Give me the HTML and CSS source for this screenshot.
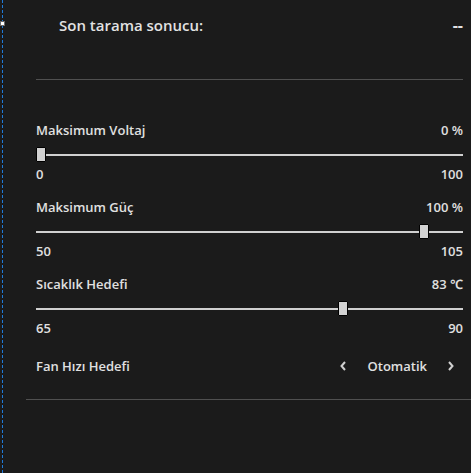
FILE: index.html
```html
<!DOCTYPE html>
<html lang="tr">
<head>
<meta charset="utf-8">
<title>Ayarlar</title>
<link rel="stylesheet" href="styles.css">
</head>
<body>
<div class="frame-edge"></div>
<div class="frame-handle"></div>
<main class="panel">
  <section class="scan">
    <div class="scan-row">
      <span class="scan-label">Son tarama sonucu:</span>
      <span class="scan-value">--</span>
    </div>
  </section>
  <div class="divider divider-top"></div>

  <section class="settings">
    <div class="group">
      <div class="row"><span>Maksimum Voltaj</span><span>0 %</span></div>
      <div class="slider"><div class="track"></div><div class="thumb" style="left: 0%"></div></div>
      <div class="row range"><span>0</span><span>100</span></div>
    </div>
    <div class="group">
      <div class="row"><span>Maksimum Güç</span><span>100 %</span></div>
      <div class="slider"><div class="track"></div><div class="thumb" style="left: 89.7%"></div></div>
      <div class="row range"><span>50</span><span>105</span></div>
    </div>
    <div class="group">
      <div class="row"><span>Sıcaklık Hedefi</span><span>83 ℃</span></div>
      <div class="slider"><div class="track"></div><div class="thumb" style="left: 70.7%"></div></div>
      <div class="row range"><span>65</span><span>90</span></div>
    </div>
    <div class="row fan">
      <span>Fan Hızı Hedefi</span>
      <div class="picker">
        <svg class="chev" width="8" height="12" viewBox="0 0 8 12"><path d="M6 2 L2.5 6 L6 10" fill="none" stroke="#d0d0d0" stroke-width="2"/></svg>
        <span class="picker-value">Otomatik</span>
        <svg class="chev" width="8" height="12" viewBox="0 0 8 12"><path d="M2 2 L5.5 6 L2 10" fill="none" stroke="#d0d0d0" stroke-width="2"/></svg>
      </div>
    </div>
  </section>
  <div class="divider divider-bottom"></div>
</main>
</body>
</html>
```

FILE: styles.css
```css
html, body {
  margin: 0;
  padding: 0;
  background: #1b1b1b;
}
body {
  font-family: "Open Sans", "Noto Sans", "DejaVu Sans", sans-serif;
  color: #e0e0e0;
  height: 473px;
  overflow: hidden;
  position: relative;
}
.frame-edge {
  position: absolute;
  left: 2px;
  top: 0;
  bottom: 0;
  border-left: 1px dashed #1f7ad8;
}
.frame-handle {
  position: absolute;
  left: 0;
  top: 21px;
  width: 3px;
  height: 3px;
  background: #ffffff;
  border: 1px solid #6a6a6a;
}
.panel {
  display: flex;
  flex-direction: column;
}
.scan {
  padding: 14px 8px 0 59px;
}
.scan-row {
  display: flex;
  justify-content: space-between;
  align-items: center;
  height: 22px;
}
.scan-label {
  font-size: 15px;
  font-weight: 600;
  color: #e2e2e2;
}
.scan-value {
  font-size: 16px;
  font-weight: 700;
  color: #e2e2e2;
}
.divider {
  height: 1px;
  background: #505050;
}
.divider-top {
  margin: 43px 8px 0 36px;
}
.settings {
  padding: 41px 8px 0 36px;
  display: flex;
  flex-direction: column;
}
.group {
  display: flex;
  flex-direction: column;
  margin-bottom: 15px;
}
.row {
  display: flex;
  justify-content: space-between;
  align-items: center;
  height: 18px;
  font-size: 13px;
  font-weight: 600;
}
.slider {
  position: relative;
  height: 16px;
  margin: 8px 0 2px;
}
.track {
  position: absolute;
  left: 0;
  right: 0;
  top: 7px;
  height: 2px;
  background: #d0d0d0;
}
.thumb {
  position: absolute;
  top: 0;
  width: 8px;
  height: 13px;
  background: #d2d2d2;
  border: 1px solid #000;
  border-radius: 1px;
}
.fan {
  margin-top: 5px;
}
.picker {
  display: flex;
  align-items: center;
  margin-right: 8px;
}
.chev {
  display: block;
}
.picker-value {
  margin: 0 20px 0 21px;
  font-weight: 600;
}
.divider-bottom {
  margin: 24px 0 0 26px;
}
```
